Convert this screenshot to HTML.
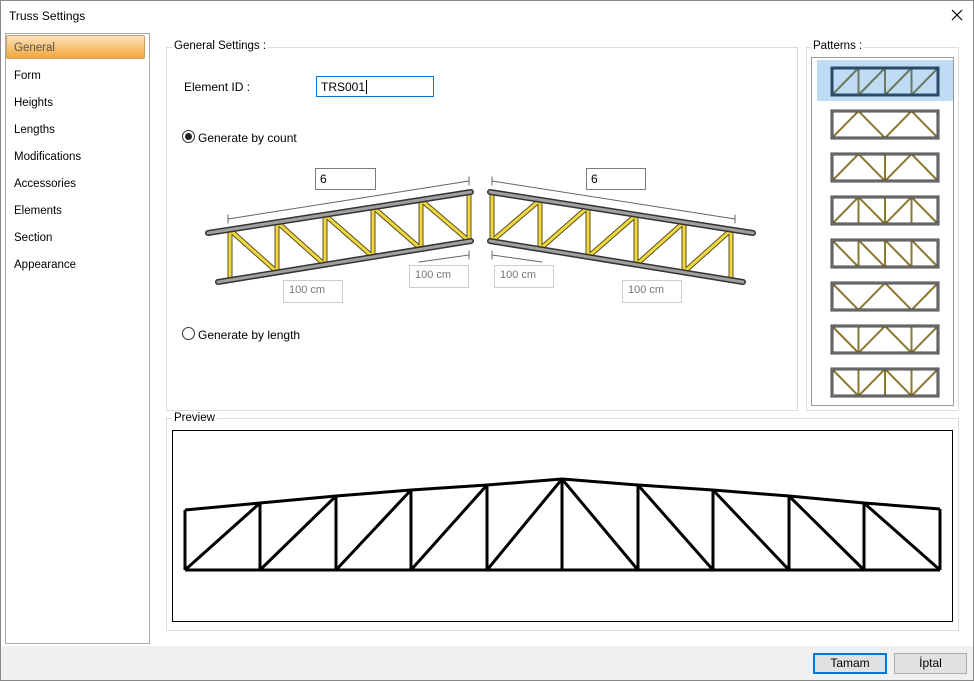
<!DOCTYPE html>
<html><head><meta charset="utf-8"><style>
body{margin:0;width:974px;height:681px;overflow:hidden;font-family:"Liberation Sans",sans-serif;font-size:12px;color:#000;background:#fff;position:relative}
.a{position:absolute}
.box{position:absolute;border:1px solid #7a7a7a;background:#fff;box-sizing:border-box;padding:3px 4px;font-size:12px}
.dim{position:absolute;border:1px solid #ccc;background:#fff;box-sizing:border-box;padding:3px 5px;font-size:11px;color:#777}
.grp{position:absolute;border:1px solid #dcdcdc;box-sizing:border-box}
.lg{position:absolute;background:#fff;padding:0 2px;font-size:11.5px}
.nav{position:absolute;left:14px;font-size:11.5px}
.radio{position:absolute;width:11px;height:11px;border:1px solid #333;border-radius:50%;background:#fff}
</style></head><body>
<div class="a" style="left:0;top:0;width:972px;height:679px;border:1px solid #888"></div>
<div class="a" style="left:9px;top:9px;font-size:12px">Truss Settings</div>
<svg class="a" style="left:951px;top:9px" width="12" height="12"><path d="M1 1L11 11M11 1L1 11" stroke="#000" stroke-width="1.2"/></svg>
<div class="a" style="left:1px;top:646px;width:972px;height:34px;background:#f0f0f0"></div>
<div class="a" style="left:5px;top:33px;width:145px;height:611px;border:1px solid #aaa;box-sizing:border-box"></div>
<div class="a" style="left:6px;top:35px;width:139px;height:24px;border:1px solid #c8a060;border-radius:2px;background:linear-gradient(#fde3c0,#f8c070 55%,#f3a640);box-sizing:border-box"></div>
<div class="nav" style="top:42px;color:#555">General</div>
<div class="nav" style="top:70px">Form</div>
<div class="nav" style="top:97px">Heights</div>
<div class="nav" style="top:124px">Lengths</div>
<div class="nav" style="top:151px">Modifications</div>
<div class="nav" style="top:178px">Accessories</div>
<div class="nav" style="top:205px">Elements</div>
<div class="nav" style="top:232px">Section</div>
<div class="nav" style="top:259px">Appearance</div>

<div class="grp" style="left:166px;top:47px;width:632px;height:364px"></div>
<div class="lg" style="left:172px;top:40px">General Settings :</div>
<div class="a" style="left:184px;top:80px">Element ID :</div>
<div class="box" style="left:316px;top:76px;width:118px;height:21px;border-color:#0078d7;padding:3px 4px">TRS001<span style="border-left:1px solid #000;margin-left:1px"></span></div>
<div class="radio" style="left:182px;top:130px"><div style="position:absolute;left:2px;top:2px;width:7px;height:7px;border-radius:50%;background:#222"></div></div>
<div class="a" style="left:198px;top:131px">Generate by count</div>
<div class="radio" style="left:182px;top:327px"></div>
<div class="a" style="left:198px;top:328px">Generate by length</div>
<div class="box" style="left:315px;top:168px;width:61px;height:22px">6</div>
<div class="box" style="left:586px;top:168px;width:60px;height:22px">6</div>
<div class="dim" style="left:283px;top:280px;width:60px;height:23px">100 cm</div>
<div class="dim" style="left:409px;top:265px;width:60px;height:23px">100 cm</div>
<div class="dim" style="left:494px;top:265px;width:60px;height:23px">100 cm</div>
<div class="dim" style="left:622px;top:280px;width:60px;height:23px">100 cm</div>

<div class="grp" style="left:806px;top:47px;width:153px;height:364px"></div>
<div class="lg" style="left:811px;top:40px">Patterns :</div>
<div class="a" style="left:811px;top:57px;width:143px;height:349px;border:1px solid #999;box-sizing:border-box"></div>
<div class="a" style="left:817px;top:60px;width:136px;height:41px;background:#bfdcf4"></div>

<div class="grp" style="left:166px;top:418px;width:793px;height:213px"></div>
<div class="lg" style="left:172px;top:412px">Preview</div>
<div class="a" style="left:172px;top:430px;width:781px;height:192px;border:1px solid #000;box-sizing:border-box"></div>

<div class="a" style="left:813px;top:653px;width:74px;height:21px;border:2px solid #0078d7;background:#e1e1e1;box-sizing:border-box;text-align:center;line-height:17px">Tamam</div>
<div class="a" style="left:894px;top:653px;width:73px;height:21px;border:1px solid #adadad;background:#e1e1e1;box-sizing:border-box;text-align:center;line-height:19px">İptal</div>

<svg class="a" style="left:0;top:0" width="974" height="681">
<defs>
<g id="fr"><rect x="0" y="0" width="106" height="27" fill="none" stroke="#444" stroke-width="3"/><rect x="0" y="0" width="106" height="27" fill="none" stroke="#888" stroke-width="1"/></g>
</defs>
<g stroke-linecap="round">
<g stroke="#666" stroke-width="1">
<line x1="228" y1="219" x2="469" y2="181"/><line x1="228" y1="215" x2="228" y2="223"/><line x1="469" y1="177" x2="469" y2="185"/>
<line x1="419" y1="262" x2="469" y2="255"/><line x1="469" y1="251" x2="469" y2="259"/>
<line x1="492" y1="181" x2="735" y2="219"/><line x1="492" y1="177" x2="492" y2="185"/><line x1="735" y1="215" x2="735" y2="223"/>
<line x1="492" y1="255" x2="542" y2="262"/><line x1="492" y1="251" x2="492" y2="259"/>
</g>
<g id="lm">
<g stroke="#5a5020" stroke-width="5">
<path d="M230 230V280M277 222V272M325 215V265M373 207V257M421 200V249M469 192V241M230 230L277 272M277 222L325 265M325 215L373 257M373 207L421 249M421 200L469 241"/>
</g>
<g stroke="#f2d840" stroke-width="3">
<path d="M230 230V280M277 222V272M325 215V265M373 207V257M421 200V249M469 192V241M230 230L277 272M277 222L325 265M325 215L373 257M373 207L421 249M421 200L469 241"/>
</g>
<line x1="208" y1="233" x2="471" y2="192" stroke="#333" stroke-width="6"/>
<line x1="208" y1="233" x2="471" y2="192" stroke="#a0a0a0" stroke-width="3"/>
<line x1="218" y1="282" x2="471" y2="241" stroke="#333" stroke-width="6"/>
<line x1="218" y1="282" x2="471" y2="241" stroke="#a0a0a0" stroke-width="3"/>
</g>
<use href="#lm" transform="translate(961,0) scale(-1,1)"/>
</g>
<g stroke="#8a7a30" stroke-width="2" fill="none">
<g transform="translate(832,68)"><path d="M26.5 0V27M53 0V27M79.5 0V27M0 27L26.5 0M26.5 27L53 0M53 27L79.5 0M79.5 27L106 0" stroke="#6a7a60"/><rect width="106" height="27" stroke="#2a4a6a" stroke-width="3"/></g>
<g transform="translate(832,111)"><path d="M0 27L26.5 0L53 27L79.5 0L106 27"/><use href="#fr"/></g>
<g transform="translate(832,154)"><path d="M0 27L26.5 0L53 27L79.5 0L106 27M53 0V27"/><use href="#fr"/></g>
<g transform="translate(832,197)"><path d="M0 27L26.5 0L53 27L79.5 0L106 27M53 0V27M26.5 0V27M79.5 0V27"/><use href="#fr"/></g>
<g transform="translate(832,240)"><path d="M26.5 0V27M53 0V27M79.5 0V27M0 0L26.5 27M26.5 0L53 27M53 0L79.5 27M79.5 0L106 27"/><use href="#fr"/></g>
<g transform="translate(832,283)"><path d="M0 0L26.5 27L53 0L79.5 27L106 0"/><use href="#fr"/></g>
<g transform="translate(832,326)"><path d="M0 0L26.5 27L53 0L79.5 27L106 0M26.5 0V27M79.5 0V27"/><use href="#fr"/></g>
<g transform="translate(832,369)"><path d="M0 0L26.5 27L53 0L79.5 27L106 0M26.5 0V27M53 0V27M79.5 0V27"/><use href="#fr"/></g>
</g>
<g stroke="#000" stroke-width="3" fill="none" stroke-linejoin="round">
<path d="M185 510L260 503L336 496L411 490L487 485L562 479L638 485L713 490L789 496L864 503L940 509"/>
<path d="M185 570H940M185 510V570M260 503V570M336 496V570M411 490V570M487 485V570M562 479V570M638 485V570M713 490V570M789 496V570M864 503V570M940 509V570"/>
<path d="M185 570L260 503M260 570L336 496M336 570L411 490M411 570L487 485M487 570L562 479M562 479L638 570M638 485L713 570M713 490L789 570M789 496L864 570M864 503L940 570"/>
</g>
</svg>
</body></html>
